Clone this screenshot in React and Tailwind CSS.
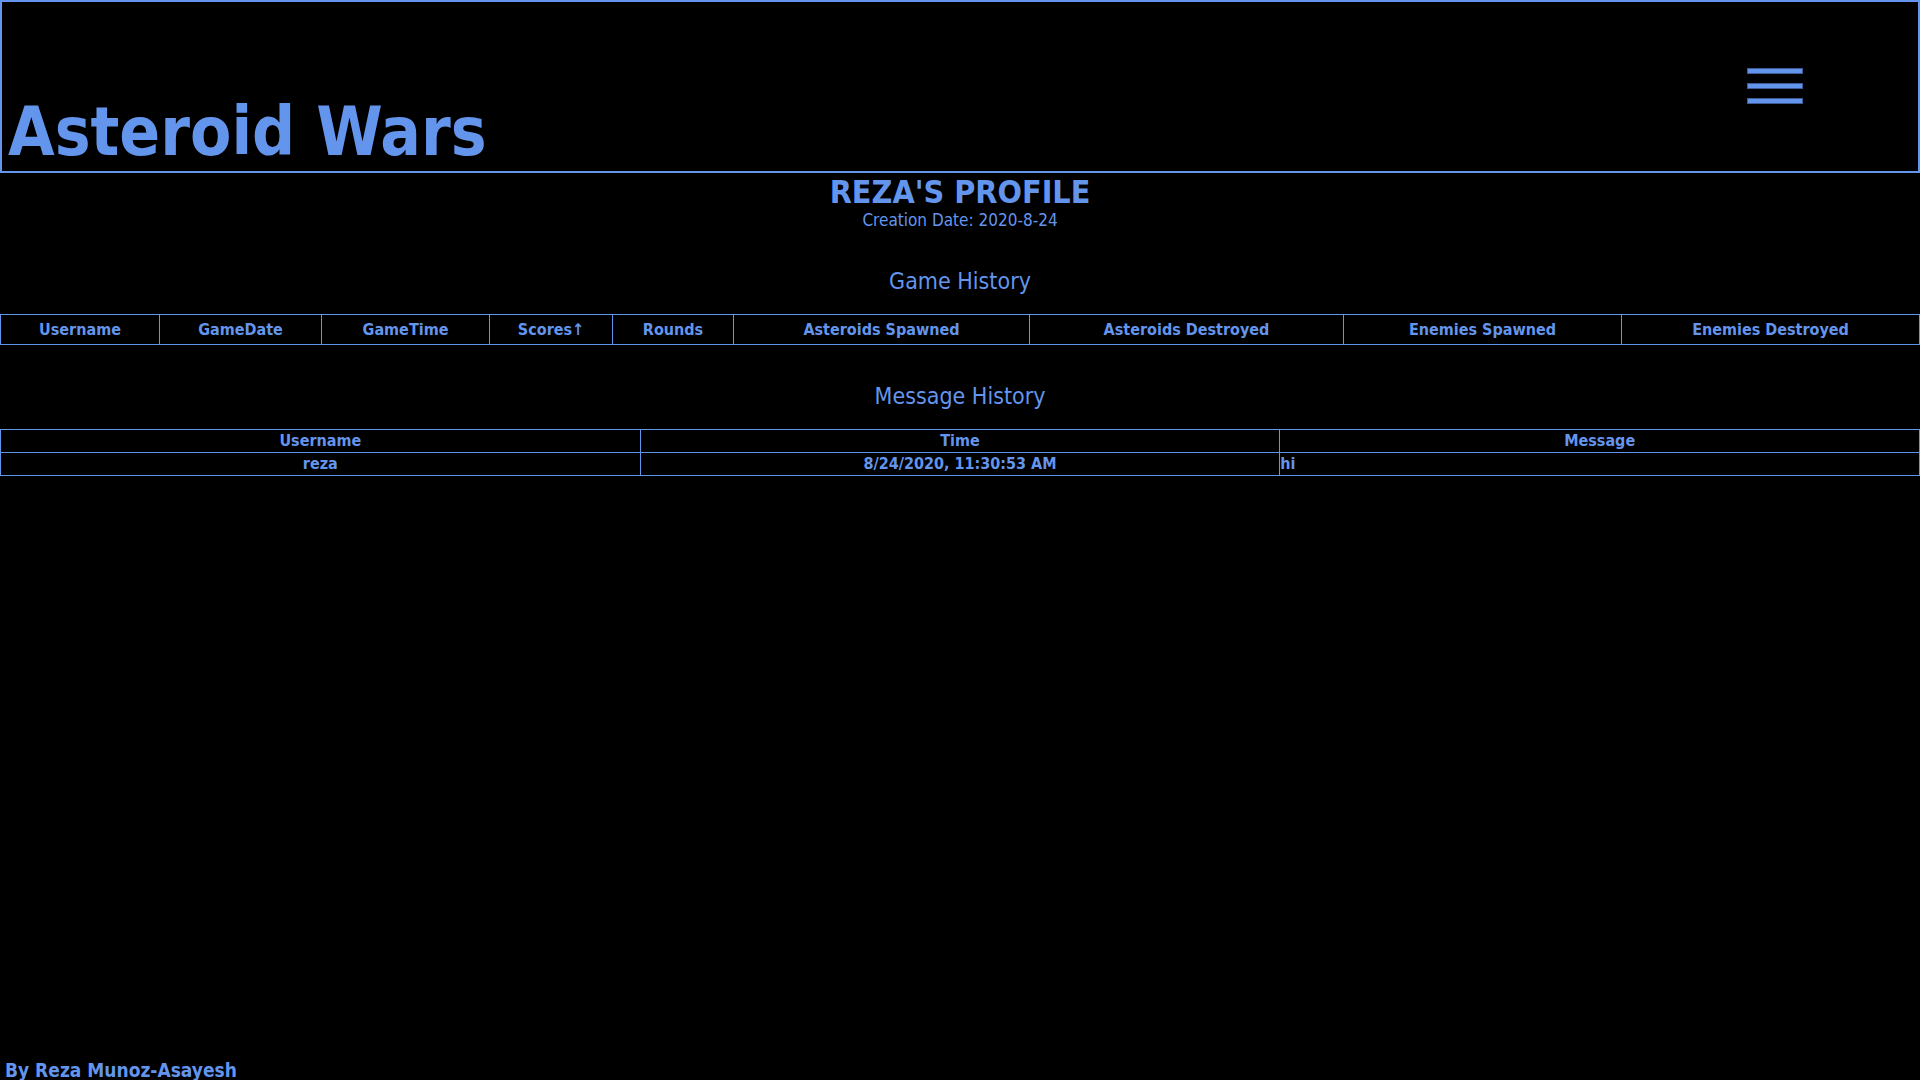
const gameCols = [
  { label: "Username", w: "w-[159px]" },
  { label: "GameDate", w: "w-[162px]" },
  { label: "GameTime", w: "w-[168px]" },
  { label: "Scores\u2191", w: "w-[123px]" },
  { label: "Rounds", w: "w-[121px]" },
  { label: "Asteroids Spawned", w: "w-[296px]" },
  { label: "Asteroids Destroyed", w: "w-[314px]" },
  { label: "Enemies Spawned", w: "w-[278px]" },
  { label: "Enemies Destroyed", w: "w-[298px]" },
];

const messages = [{ username: "reza", time: "8/24/2020, 11:30:53 AM", message: "hi" }];

function Hamburger() {
  return (
    <button className="mt-[66px] mr-[115px] flex flex-col gap-[9px]" aria-label="menu">
      <span className="block h-[6px] w-[56px] border border-[#3b5c96] bg-[#6495ed]" />
      <span className="block h-[6px] w-[56px] border border-[#3b5c96] bg-[#6495ed]" />
      <span className="block h-[6px] w-[56px] border border-[#3b5c96] bg-[#6495ed]" />
    </button>
  );
}

export default function App() {
  return (
    <div className="flex h-screen flex-col overflow-hidden bg-black font-['DejaVu_Sans_Condensed','DejaVu_Sans',sans-serif] text-[#6495ed]">
      <header className="flex h-[173px] items-stretch justify-between border-2 border-[#6495ed]">
        <h1 className="self-end pb-[5px] pl-[6px] text-[67px] leading-none font-bold">Asteroid Wars</h1>
        <Hamburger />
      </header>

      <div className="flex flex-col items-center">
        <h2 className="mt-[3px] text-[32px] leading-none font-bold">REZA'S PROFILE</h2>
        <p className="mt-[4px] text-[17px] leading-none">Creation Date: 2020-8-24</p>
        <h3 className="mt-[41px] text-[23px] leading-none">Game History</h3>
      </div>

      <table className="mt-[21px] w-full border-collapse text-[16px] font-bold">
        <thead>
          <tr className="h-[30px]">
            {gameCols.map((c) => (
              <th key={c.label} className={`${c.w} border border-[#6495ed] p-0 text-center font-bold`}>
                {c.label}
              </th>
            ))}
          </tr>
        </thead>
      </table>

      <h3 className="mt-[40px] self-center text-[23px] leading-none">Message History</h3>

      <table className="mt-[21px] w-full table-fixed border-collapse text-[16px] font-bold">
        <thead>
          <tr className="h-[23px]">
            <th className="border border-[#6495ed] p-0 leading-[20px] text-center">Username</th>
            <th className="border border-[#6495ed] p-0 leading-[20px] text-center">Time</th>
            <th className="border border-[#6495ed] p-0 leading-[20px] text-center">Message</th>
          </tr>
        </thead>
        <tbody>
          {messages.map((m) => (
            <tr key={m.time} className="h-[23px]">
              <td className="border border-[#6495ed] p-0 leading-[20px] text-center">{m.username}</td>
              <td className="border border-[#6495ed] p-0 leading-[20px] text-center">{m.time}</td>
              <td className="border border-[#6495ed] p-0 leading-[20px] text-left">{m.message}</td>
            </tr>
          ))}
        </tbody>
      </table>

      <footer className="mt-auto h-[19px] pl-[5px] text-[19px] leading-none font-bold">By Reza Munoz-Asayesh</footer>
    </div>
  );
}
